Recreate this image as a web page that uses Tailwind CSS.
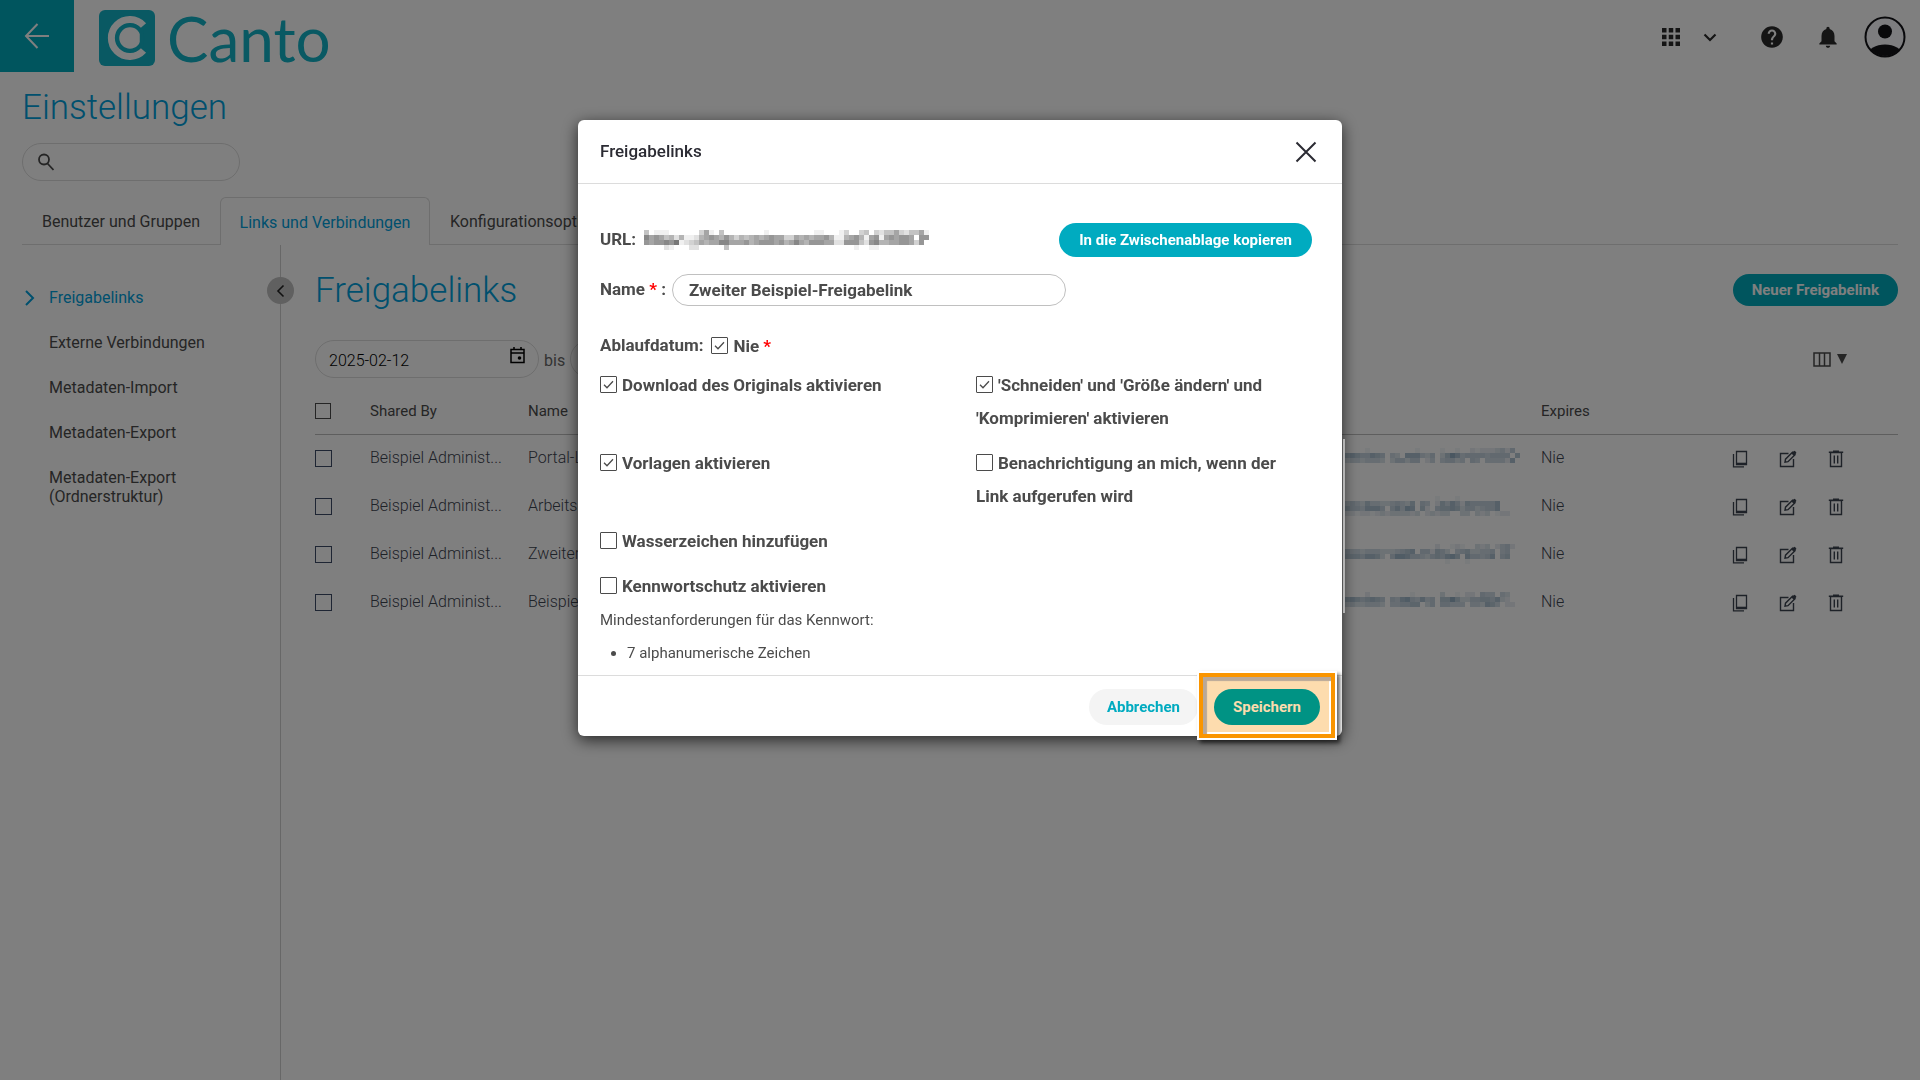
<!DOCTYPE html>
<html lang="de">
<head>
    <meta charset="UTF-8">
    <meta name="viewport" content="width=device-width, initial-scale=1.0">
    <title>Einstellungen - Freigabelinks</title>
    <script src="https://cdn.jsdelivr.net/npm/@tailwindcss/browser@4"></script>
</head>
<body class="min-h-screen flex flex-col bg-white font-['Roboto',sans-serif] text-base text-[#4b4b4b]">
    <!-- Icons used more than once -->
    <svg class="hidden">
        <symbol id="icon-copy" viewBox="0 0 16 18">
            <path d="M4.5 1.5h10v13h-10z M1.5 4v12.8H12" fill="none" stroke="currentColor" stroke-width="1.3"/>
            <path d="M4.5 13.5h10" stroke="currentColor" stroke-width="1.6"/>
        </symbol>
        <symbol id="icon-edit" viewBox="0 0 18 18">
            <path d="M9.5 3.5H1.5v13h13V9" fill="none" stroke="currentColor" stroke-width="1.4"/>
            <path d="M6 12.2l.5-3 7-7 2.5 2.5-7 7z" fill="none" stroke="currentColor" stroke-width="1.4"/>
            <path d="M12.4 3.4L14.6 1.2q.8-.7 1.6 0l.8.8q.7.8 0 1.6l-2.2 2.2z" fill="currentColor"/>
        </symbol>
        <symbol id="icon-trash" viewBox="0 0 16 18">
            <path d="M2.5 2.5h11v14h-11z M6.3 5.5v8 M9.7 5.5v8 M.8 2.3h14.4 M5 1.3h6" fill="none" stroke="currentColor" stroke-width="1.4"/>
        </symbol>
        <symbol id="icon-check" viewBox="0 0 17 17">
            <path d="M4 8.7l3 3 6-6.4" fill="none" stroke="currentColor" stroke-width="1.3"/>
        </symbol>
    </svg>

    <!-- Top bar -->
    <header class="flex items-center h-18">
        <a href="#" aria-label="Zurück" class="w-[74px] h-18 flex items-center justify-center bg-[#00abbd] text-white">
            <svg class="w-7 h-7" viewBox="0 0 28 28" fill="none" stroke="currentColor" stroke-width="2"><path d="M26 14H3 M14.500 2L3 14l11.500 12"/></svg>
        </a>
        <a href="#" class="flex items-center ml-[25px] mt-[3px] text-[#12b2c6]">
            <svg class="w-14 h-14" viewBox="0 0 56 56">
                <rect width="56" height="56" rx="6" fill="currentColor"/>
                <path d="M44.500 15.500A18.500 18.500 0 1 0 44.500 40.500" fill="none" stroke="#fff" stroke-width="7"/>
                <circle cx="31" cy="28" r="12.500" fill="#fff" stroke="currentColor" stroke-width="3.500"/>
                <path d="M42.500 19v18" stroke="currentColor" stroke-width="3.500"/>
            </svg>
            <span class="ml-3 font-['Lato',sans-serif] text-[62px] leading-[56px]">Canto</span>
        </a>
        <div class="ml-auto mr-[14px] mt-[2px] flex items-center text-[#2b2b2b]">
            <button type="button" aria-label="Apps" class="flex items-center gap-[22px]">
                <svg class="w-[18px] h-[18px]" viewBox="0 0 18 18" fill="currentColor"><path d="M0 0h4.500v4.500H0z M6.750 0h4.500v4.500h-4.500z M13.500 0H18v4.500h-4.500z M0 6.750h4.500v4.500H0z M6.750 6.750h4.500v4.500h-4.500z M13.500 6.750H18v4.500h-4.500z M0 13.500h4.500V18H0z M6.750 13.500h4.500V18h-4.500z M13.500 13.500H18V18h-4.500z"/></svg>
                <svg class="w-4 h-4" viewBox="0 0 16 16" fill="none" stroke="currentColor" stroke-width="2.200"><path d="M2.500 5.500L8 11l5.500-5.500"/></svg>
            </button>
            <button type="button" aria-label="Hilfe" class="ml-[41px]">
                <svg class="w-[26px] h-[26px]" viewBox="0 0 24 24" fill="currentColor"><path d="M12 2C6.480 2 2 6.480 2 12s4.480 10 10 10 10-4.480 10-10S17.520 2 12 2zm1 17h-2v-2h2v2zm2.070-7.750l-.9.920C13.450 12.900 13 13.500 13 15h-2v-.5c0-1.100.45-2.100 1.170-2.830l1.240-1.260c.37-.36.59-.86.59-1.410 0-1.100-.9-2-2-2s-2 .9-2 2H8c0-2.210 1.790-4 4-4s4 1.790 4 4c0 .88-.36 1.680-.93 2.250z"/></svg>
            </button>
            <button type="button" aria-label="Mitteilungen" class="ml-[30px]">
                <svg class="w-[26px] h-[26px]" viewBox="0 0 24 24" fill="currentColor"><path d="M12 22c1.100 0 2-.9 2-2h-4c0 1.100.89 2 2 2zm6-6v-5c0-3.070-1.640-5.640-4.500-6.320V4c0-.83-.67-1.500-1.500-1.500s-1.500.67-1.500 1.500v.68C7.630 5.360 6 7.920 6 11v5l-2 2v1h16v-1l-2-2z"/></svg>
            </button>
            <button type="button" aria-label="Profil" class="ml-[23px] text-[#121216]">
                <svg class="w-[42px] h-[42px]" viewBox="0 0 42 42">
                    <clipPath id="avatar-clip"><circle cx="21" cy="21" r="19"/></clipPath>
                    <circle cx="21" cy="21" r="19.500" fill="#fafaff" stroke="currentColor" stroke-width="2"/>
                    <circle cx="21" cy="15.500" r="7" fill="currentColor"/>
                    <ellipse cx="21" cy="39" rx="17" ry="10.500" fill="currentColor" clip-path="url(#avatar-clip)"/>
                </svg>
            </button>
        </div>
    </header>

    <h1 class="pl-[22px] pt-[15px] text-[35px] leading-[42px] font-light text-[#00a0dc]">Einstellungen</h1>

    <!-- Search -->
    <div class="mt-[14px] ml-[22px] w-[218px] h-[38px] flex items-center pl-[15px] border border-[#dcdcdc] rounded-full">
        <svg class="w-4 h-[18px] shrink-0" viewBox="0 0 16 18" fill="none" stroke="currentColor" stroke-width="1.800"><circle cx="6" cy="6.500" r="5"/><path d="M9.500 10.500l6 6.500"/></svg>
        <input type="search" aria-label="Suchen" class="w-full px-3 outline-none">
    </div>

    <!-- Tabs -->
    <nav class="mt-4 mx-[22px] h-12 flex items-stretch border-b border-[#dcdcdc]">
        <a href="#" class="w-[198px] pt-[2px] flex items-center justify-center">Benutzer und Gruppen</a>
        <a href="#" class="w-[210px] pt-[2px] -mb-px flex items-center justify-center border border-b-0 border-[#dcdcdc] rounded-t-md bg-white text-[#00a0dc]">Links und Verbindungen</a>
        <a href="#" class="pl-5 pt-[2px] flex items-center">Konfigurationsoptionen</a>
    </nav>

    <div class="flex-1 flex">
        <!-- Side menu -->
        <aside class="relative w-[281px] shrink-0 border-r border-[#cfcfcf]">
            <button type="button" aria-label="Menü einklappen" class="absolute top-8 -right-[14px] w-[27px] h-[27px] rounded-full bg-[#c0c0c0] flex items-center justify-center text-[#222]">
                <svg class="w-[14px] h-[14px]" viewBox="0 0 14 14" fill="none" stroke="currentColor" stroke-width="1.600"><path d="M9.500 1.500L4 7l5.500 5.500"/></svg>
            </button>
            <ul class="pt-[43px] pl-[49px] flex flex-col gap-[26px] leading-[19px]">
                <li class="flex items-center -ml-6 text-[#00a0dc]">
                    <svg class="w-[10px] h-4 mr-[14px]" viewBox="0 0 10 16" fill="none" stroke="currentColor" stroke-width="2"><path d="M1 1l7 7-7 7"/></svg>
                    <a href="#">Freigabelinks</a>
                </li>
                <li><a href="#">Externe Verbindungen</a></li>
                <li><a href="#">Metadaten-Import</a></li>
                <li><a href="#">Metadaten-Export</a></li>
                <li><a href="#">Metadaten-Export<br>(Ordnerstruktur)</a></li>
            </ul>
        </aside>

        <main class="flex-1 pl-[34px] pr-[22px]">
            <div class="pt-[25px] flex items-center">
                <h2 class="text-[35px] leading-[42px] font-light text-[#00a0dc]">Freigabelinks</h2>
                <button type="button" class="ml-auto mb-[2px] h-8 px-[19px] rounded-full bg-[#00abbd] text-white text-[15px] font-bold">Neuer Freigabelink</button>
            </div>

            <div class="mt-7 flex items-center text-[#666]">
                <div class="w-[224px] h-[38px] flex items-center px-[13px] border border-[#dcdcdc] rounded-full text-black">
                    <input type="text" aria-label="Von" value="2025-02-12" class="w-full pt-[3px] font-light outline-none">
                    <svg class="w-[15px] h-[17px] mb-2 shrink-0" viewBox="0 0 15 17" fill="none" stroke="currentColor" stroke-width="1.500"><path d="M1 2.500h13v13H1z M1 6h13 M4 0v3 M11 0v3"/><circle cx="9.500" cy="11" r="1.800" fill="currentColor" stroke="none"/></svg>
                </div>
                <span class="mx-[5px] pt-[3px]">bis</span>
                <input type="text" aria-label="Bis" value="2026-02-12" class="w-[224px] h-[38px] px-[13px] border border-[#dcdcdc] rounded-full font-light text-black">
                <button type="button" aria-label="Spalten" class="ml-auto mr-[51px] flex items-center gap-[6px] text-[#4b4b4b]">
                    <svg class="w-[18px] h-[15px]" viewBox="0 0 18 15" fill="none" stroke="currentColor" stroke-width="1.500"><path d="M1 1h16v13H1z M6.500 1v13 M11.500 1v13"/></svg>
                    <svg class="w-[10px] h-[10px]" viewBox="0 0 10 10" fill="currentColor"><path d="M0 0h10L5 10z"/></svg>
                </button>
            </div>

            <!-- Shared links -->
            <table class="mt-[10px] w-full table-fixed text-left">
                <thead>
                    <tr class="h-[46px] border-b border-[#bdbdbd] text-[15px]">
                        <th class="w-[55px]"><input type="checkbox" aria-label="Alle auswählen" class="appearance-none block w-4 h-4 border-[1.5px] border-[#4b4b4b]"></th>
                        <th class="w-[158px] font-normal">Shared By</th>
                        <th class="font-normal">Name</th>
                        <th class="w-[201px]" aria-label="Link"></th>
                        <th class="w-[175px] font-normal">Expires</th>
                        <th class="w-[182px]" aria-label="Aktionen"></th>
                    </tr>
                </thead>
                <tbody id="links" class="font-light text-[#3d4450]"></tbody>
            </table>
        </main>
    </div>

    <!-- Dialog -->
    <div class="fixed inset-0 flex items-start justify-center pt-[120px] bg-black/50">
        <section role="dialog" aria-labelledby="dialog-title" class="relative w-[764px] rounded-md bg-white shadow-[0_4px_16px_rgba(0,0,0,0.7)]">
            <div class="absolute -right-[3px] top-[319px] w-[2px] h-[174px] bg-[#b4b4b4]"></div>
            <div class="h-16 pl-[22px] pr-[25px] flex items-center border-b border-[#dcdcdc] text-[#2b2b33]">
                <h3 id="dialog-title" class="text-[17px] font-medium">Freigabelinks</h3>
                <button type="button" aria-label="Schließen" class="ml-auto">
                    <svg class="w-[22px] h-[22px]" viewBox="0 0 22 22" fill="none" stroke="currentColor" stroke-width="2"><path d="M1.500 1.500l19 19 M20.500 1.500l-19 19"/></svg>
                </button>
            </div>

            <form class="pt-[39px] pl-[22px] pr-[30px] text-[17px] font-bold">
                <div class="flex items-center">
                    <span>URL:</span>
                    <svg id="url" class="ml-2 w-[285px] h-5" viewBox="0 0 57 4" preserveAspectRatio="none" shape-rendering="crispEdges" fill="#4b4b4b"></svg>
                    <button type="button" class="ml-auto h-[34px] px-5 rounded-full bg-[#00abc0] text-white text-[15px]">In die Zwischenablage kopieren</button>
                </div>
                <div class="mt-[17px] flex items-center">
                    <label for="name">Name <span class="text-[#ff0000]">*</span> :</label>
                    <input id="name" type="text" value="Zweiter Beispiel-Freigabelink" class="ml-[6px] w-[394px] h-8 px-4 border border-[#c0c0c0] rounded-full">
                </div>
                <div class="mt-[22px] flex items-center leading-[33px]">
                    <span>Ablaufdatum:</span>
                    <label class="ml-2 pt-[2px]"><span class="relative inline-block align-middle mr-[5px] mb-1"><input type="checkbox" checked class="appearance-none block w-[17px] h-[17px] border-[1.5px] border-[#4b4b4b] rounded-[1px]"><svg class="absolute inset-0 w-[17px] h-[17px]"><use href="#icon-check"/></svg></span>Nie <span class="text-[#ff0000]">*</span></label>
                </div>
                <div class="mt-[6px] grid grid-cols-[376px_1fr] gap-y-3 leading-[33px]">
                    <label><span class="relative inline-block align-middle mr-[5px] mb-1"><input type="checkbox" checked class="appearance-none block w-[17px] h-[17px] border-[1.5px] border-[#4b4b4b] rounded-[1px]"><svg class="absolute inset-0 w-[17px] h-[17px]"><use href="#icon-check"/></svg></span>Download des Originals aktivieren</label>
                    <label><span class="relative inline-block align-middle mr-[5px] mb-1"><input type="checkbox" checked class="appearance-none block w-[17px] h-[17px] border-[1.5px] border-[#4b4b4b] rounded-[1px]"><svg class="absolute inset-0 w-[17px] h-[17px]"><use href="#icon-check"/></svg></span>'Schneiden' und 'Größe ändern' und 'Komprimieren' aktivieren</label>
                    <label><span class="relative inline-block align-middle mr-[5px] mb-1"><input type="checkbox" checked class="appearance-none block w-[17px] h-[17px] border-[1.5px] border-[#4b4b4b] rounded-[1px]"><svg class="absolute inset-0 w-[17px] h-[17px]"><use href="#icon-check"/></svg></span>Vorlagen aktivieren</label>
                    <label><span class="relative inline-block align-middle mr-[5px] mb-1"><input type="checkbox" class="appearance-none block w-[17px] h-[17px] border-[1.5px] border-[#4b4b4b] rounded-[1px]"></span>Benachrichtigung an mich, wenn der Link aufgerufen wird</label>
                    <label><span class="relative inline-block align-middle mr-[5px] mb-1"><input type="checkbox" class="appearance-none block w-[17px] h-[17px] border-[1.5px] border-[#4b4b4b] rounded-[1px]"></span>Wasserzeichen hinzufügen</label>
                    <label class="col-start-1"><span class="relative inline-block align-middle mr-[5px] mb-1"><input type="checkbox" class="appearance-none block w-[17px] h-[17px] border-[1.5px] border-[#4b4b4b] rounded-[1px]"></span>Kennwortschutz aktivieren</label>
                </div>
                <div class="pt-px text-[15px] leading-[33px] font-normal">
                    <p>Mindestanforderungen für das Kennwort:</p>
                    <ul class="list-disc pl-[27px]">
                        <li>7 alphanumerische Zeichen</li>
                    </ul>
                </div>
            </form>

            <div class="mt-[5px] h-[61px] pt-[2px] pr-[22px] flex items-center justify-end gap-4 border-t border-[#dcdcdc] text-[15px] font-bold">
                <button type="button" class="h-9 px-[18px] rounded-full bg-[#f4f4f4] text-[#00abc0]">Abbrechen</button>
                <div class="relative">
                    <!-- Highlight frame around the save button -->
                    <div class="absolute -inset-x-[15px] -top-4 -bottom-[13px] border-4 border-[#fa9500] bg-[#fddcae] outline-2 outline-white shadow-[3px_3px_4px_2px_rgba(0,0,0,0.6),inset_4px_4px_1px_#b9a898,inset_-2px_-2px_0_#fff]"></div>
                    <button type="button" class="relative h-9 px-[19px] rounded-full bg-[#009384] text-[#fbdcae]">Speichern</button>
                </div>
            </div>
        </section>
    </div>

    <script>
        // Masked addresses, one digit per tile, 0 = empty, 9 = darkest
        const url = [
            '401110000003610400000000100000000011000130034032446324461',
            '867645251125676575354565676633656566751156751671676776077',
            '767787912346566886667567776756865777662277742785566776370',
            '000021000220000040000000000000000000000000100110000000000',
        ];
        const rows = [
            { name: 'Portal-L', link: ['000001000000000100001001002122234250', '067655765043077743503697455554555506', '034434443035535502404553405404444270'] },
            { name: 'Arbeitsl', link: ['000000000000000000010001000000000000', '045436443345436054026475265555570000', '065547775057487062056676355345570000', '022122123233332302323300330323012200'] },
            { name: 'Zweiter', link: ['000000000000000000020012100323024520', '054434443334567055265304563344504500', '066657763058875543565786075545705600', '000000000000000000000100010000000000'] },
            { name: 'Beispiel', link: ['000002000000001000003001022054404300', '067656765054785474506696335566573200', '034334443044556603505544404437640220'] },
        ];

        const tiles = (data, fade) => data.map((line, y) => [...line].map((n, x) =>
            n === '0' ? '' : `<rect x="${x}" y="${y}" width="1" height="1" fill-opacity="${n / fade}"/>`).join('')).join('');

        document.getElementById('url').innerHTML = tiles(url, 12);
        document.getElementById('links').innerHTML = rows.map((row) => `
            <tr class="h-[48px]">
                <td><input type="checkbox" aria-label="${row.name}" class="appearance-none block w-[17px] h-[17px] border-[1.5px] border-[#3d4a66]"></td>
                <td>Beispiel Administ...</td>
                <td>${row.name}</td>
                <td><svg class="block w-[180px] h-5" viewBox="0 0 36 4" shape-rendering="crispEdges" fill="#2a5f88">${tiles(row.link, 18)}</svg></td>
                <td>Nie</td>
                <td>
                    <div class="pt-[2px] flex">
                        <button type="button" aria-label="Kopieren" class="w-12 flex justify-center"><svg class="w-4 h-[18px]"><use href="#icon-copy"/></svg></button>
                        <button type="button" aria-label="Bearbeiten" class="w-12 flex justify-center"><svg class="w-[18px] h-[18px]"><use href="#icon-edit"/></svg></button>
                        <button type="button" aria-label="Löschen" class="w-12 flex justify-center"><svg class="w-4 h-[18px]"><use href="#icon-trash"/></svg></button>
                    </div>
                </td>
            </tr>`).join('');
    </script>
</body>
</html>
